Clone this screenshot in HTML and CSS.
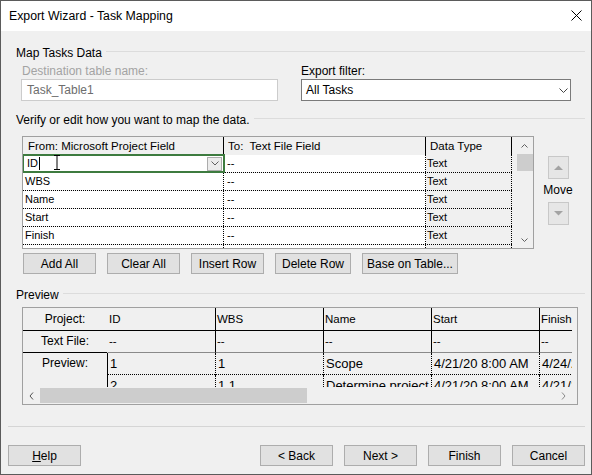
FILE: index.html
```html
<!DOCTYPE html>
<html>
<head>
<meta charset="utf-8">
<title>Export Wizard - Task Mapping</title>
<link rel="stylesheet" href="styles.css">
</head>
<body>
<div class="window">
  <div class="titlebar">
    <span class="title">Export Wizard - Task Mapping</span>
    <svg class="close" width="11" height="11" viewBox="0 0 11 11"><path d="M0.5 0.5 L10.5 10.5 M10.5 0.5 L0.5 10.5" stroke="#000" stroke-width="1" fill="none"/></svg>
  </div>
  <div class="content">
    <div class="group-head mtd"><span>Map Tasks Data</span><i class="rule"></i></div>
    <div class="fields">
      <div class="field dest">
        <div class="flabel">Destination table name:</div>
        <div class="input">Task_Table1</div>
      </div>
      <div class="field filter">
        <div class="flabel">Export filter:</div>
        <div class="select"><span>All Tasks</span><svg width="9" height="5" viewBox="0 0 9 5"><path d="M0.5 0.5 L4.5 4.5 L8.5 0.5" fill="none" stroke="#444"/></svg></div>
      </div>
    </div>
    <div class="group-head verify"><span>Verify or edit how you want to map the data.</span><i class="rule"></i></div>
    <div class="map-area">
      <div class="grid">
        <div class="gtable">
          <div class="grow ghead"><div class="c c1">From: Microsoft Project Field</div><div class="c c2">To:  Text File Field</div><div class="c c3">Data Type</div></div>
          <div class="grow"><div class="c c1 edit">ID<span class="caret"></span><span class="ibeam"><svg width="8" height="15" viewBox="0 0 8 15"><path d="M1 0.5 H7 M4 0.5 V14.5 M1 14.5 H7" stroke="#000" fill="none"/></svg></span><span class="dd"><svg width="8" height="5" viewBox="0 0 8 5"><path d="M0.5 0.5 L4 4 L7.5 0.5" fill="none" stroke="#606060"/></svg></span></div><div class="c c2">--</div><div class="c c3">Text</div></div>
          <div class="grow"><div class="c c1">WBS</div><div class="c c2">--</div><div class="c c3">Text</div></div>
          <div class="grow"><div class="c c1">Name</div><div class="c c2">--</div><div class="c c3">Text</div></div>
          <div class="grow"><div class="c c1">Start</div><div class="c c2">--</div><div class="c c3">Text</div></div>
          <div class="grow"><div class="c c1">Finish</div><div class="c c2">--</div><div class="c c3">Text</div></div>
          <div class="grow"><div class="c c1"></div><div class="c c2"></div><div class="c c3"></div></div>
        </div>
        <div class="vscroll">
          <div class="sarrow"><svg width="7" height="4" viewBox="0 0 7 4"><path d="M0.5 3.5 L3.5 0.5 L6.5 3.5" fill="none" stroke="#606060"/></svg></div>
          <div class="thumb"></div>
          <div class="spacer"></div>
          <div class="sarrow"><svg width="7" height="4" viewBox="0 0 7 4"><path d="M0.5 0.5 L3.5 3.5 L6.5 0.5" fill="none" stroke="#606060"/></svg></div>
        </div>
      </div>
      <div class="move">
        <div class="mbtn up"><svg width="9" height="5" viewBox="0 0 9 5"><path d="M0 5 L4.5 0.5 L9 5Z" fill="#a3a3a3"/></svg></div>
        <div class="move-label">Move</div>
        <div class="mbtn down"><svg width="9" height="5" viewBox="0 0 9 5"><path d="M0 0 L4.5 4.5 L9 0Z" fill="#a3a3a3"/></svg></div>
      </div>
    </div>
    <div class="btn-row">
      <div class="btn">Add All</div>
      <div class="btn">Clear All</div>
      <div class="btn">Insert Row</div>
      <div class="btn w76">Delete Row</div>
      <div class="btn w96">Base on Table...</div>
    </div>
    <div class="group-head prev-head"><span>Preview</span><i class="rule"></i></div>
    <div class="preview">
      <div class="pv-main">
        <div class="pv-table">
          <div class="pv-row h1"><div class="pv-label">Project:</div><div class="pv-cell first">ID</div><div class="pv-cell">WBS</div><div class="pv-cell">Name</div><div class="pv-cell">Start</div><div class="pv-cell">Finish</div></div>
          <div class="pv-row h2"><div class="pv-label">Text File:</div><div class="pv-cell first">--</div><div class="pv-cell">--</div><div class="pv-cell">--</div><div class="pv-cell">--</div><div class="pv-cell">--</div></div>
          <div class="pv-row d"><div class="pv-label">Preview:</div><div class="pv-cell first">1</div><div class="pv-cell">1</div><div class="pv-cell">Scope</div><div class="pv-cell">4/21/20 8:00 AM</div><div class="pv-cell">4/24/20 5:00 PM</div></div>
          <div class="pv-row d"><div class="pv-label"></div><div class="pv-cell first">2</div><div class="pv-cell">1.1</div><div class="pv-cell">Determine project scope</div><div class="pv-cell">4/21/20 8:00 AM</div><div class="pv-cell">4/21/20 12:00 PM</div></div>
        </div>
        <div class="hscroll">
          <div class="harrow"><svg width="5" height="8" viewBox="0 0 5 8"><path d="M4 0.5 L1 4 L4 7.5" fill="none" stroke="#505050"/></svg></div>
          <div class="hthumb"></div>
          <div class="spacer"></div>
          <div class="harrow"><svg width="5" height="8" viewBox="0 0 5 8"><path d="M1 0.5 L4 4 L1 7.5" fill="none" stroke="#8a8a8a"/></svg></div>
        </div>
      </div>
    </div>
  </div>
  <div class="footer">
    <div class="sep"></div>
    <div class="foot-btns">
      <div class="btn help"><span><u>H</u>elp</span></div>
      <div class="btn">&lt; Back</div>
      <div class="btn">Next &gt;</div>
      <div class="btn">Finish</div>
      <div class="btn">Cancel</div>
    </div>
  </div>
</div>
</body>
</html>
```

FILE: styles.css
```css
* { box-sizing: border-box; margin: 0; padding: 0; }
html, body { margin: 0; padding: 0; }
body {
  background: #f0f0f0;
  font-family: "Liberation Sans", Arial, sans-serif;
  font-size: 12px;
  color: #000;
}
.window {
  width: 592px;
  height: 475px;
  border: 1px solid #5b5b5b;
  background: #f0f0f0;
  display: flex;
  flex-direction: column;
  overflow: hidden;
}
.titlebar {
  height: 30px;
  flex: none;
  background: #fff;
  display: flex;
  align-items: center;
  padding: 0 9px 0 8px;
}
.title { line-height: 16px; font-size: 12.3px; }
.close { margin-left: auto; display: block; margin-top: -1px; }

.content { padding: 0 6px 0 15px; display: flex; flex-direction: column; }
.group-head {
  display: flex;
  align-items: center;
  height: 16px;
  line-height: 16px;
  white-space: nowrap;
}
.rule { flex: 1; border-top: 1px solid #dcdcdc; margin-bottom: 4px; }
.mtd { margin-top: 14px; }
.mtd .rule { margin-left: 4px; }
.verify { margin-top: 11px; }
.verify .rule { margin-left: 5px; }
.prev-head { margin-top: 13px; }
.prev-head .rule { margin-left: 4px; }

.fields { display: flex; gap: 23px; margin: 2px 0 0 5px; }
.flabel { height: 16px; line-height: 16px; }
.dest { width: 257px; }
.dest .flabel { padding-left: 1px; color: #a3a3a3; }
.filter { width: 270px; }
.input {
  height: 22px;
  border: 1px solid #cccccc;
  background: #fff;
  color: #6d6d6d;
  padding-left: 5px;
  line-height: 20px;
}
.select {
  height: 22px;
  border: 1px solid #7a7a7a;
  background: #fff;
  display: flex;
  align-items: center;
  padding: 0 2px 0 4px;
}
.select svg { margin-left: auto; display: block; }

.map-area { display: flex; margin: 8px 0 0 6px; }
.grid {
  width: 512px;
  height: 113px;
  border: 1px solid #a0a0a0;
  display: flex;
  flex: none;
  background: #f0f0f0;
}
.gtable { width: 489px; height: 111px; overflow: hidden; flex: none; }
.grow {
  display: flex;
  height: 18px;
  border-bottom: 1px dotted #000;
  font-size: 11px;
  line-height: 17px;
}
.ghead { border-bottom: 0; font-size: 11.5px; line-height: 18px; white-space: pre; }
.c { flex: none; overflow: hidden; white-space: nowrap; }
.grow .c1 { width: 201px; background: #fff; border-right: 1px dotted #000; padding-left: 2px; }
.grow .c2 { width: 202px; background: #fff; border-right: 1px dotted #000; padding-left: 3px; }
.grow .c3 { width: 86px; background: #f0f0f0; border-right: 1px dotted #000; padding-left: 1px; }
.ghead .c { background: #f0f0f0; border-right: 1px solid #000; white-space: pre; }
.ghead .c1 { padding-left: 5px; }
.ghead .c2 { padding-left: 4px; }
.ghead .c3 { padding-left: 4px; }
.grow .edit {
  position: relative;
  display: flex;
  align-items: center;
  overflow: visible;
  outline: 2px solid #3d7b3f;
  outline-offset: -1px;
  z-index: 1;
  padding-left: 4px;
}
.caret { width: 1px; height: 13px; background: #000; margin-left: 1px; }
.ibeam { position: absolute; left: 30px; top: 0; display: block; line-height: 0; }
.dd {
  margin-left: auto;
  margin-right: 1px;
  width: 15px;
  height: 14px;
  border: 1px solid #acacac;
  background: #ececec;
  display: flex;
  align-items: center;
  justify-content: center;
}
.dd svg { display: block; }

.vscroll {
  width: 17px;
  margin-left: 4px;
  display: flex;
  flex-direction: column;
  background: #f0f0f0;
  flex: none;
}
.sarrow { height: 17px; flex: none; display: flex; align-items: center; justify-content: center; }
.sarrow svg { display: block; }
.thumb { height: 17px; flex: none; background: #cdcdcd; margin-left: 1px; }
.spacer { flex: 1; }

.move {
  width: 28px;
  margin-left: 10px;
  display: flex;
  flex-direction: column;
  align-items: center;
  flex: none;
}
.mbtn {
  width: 21px;
  height: 23px;
  border: 1px solid #c8c8c8;
  background: #e6e6e6;
  display: flex;
  align-items: center;
  justify-content: center;
}
.mbtn svg { display: block; }
.mbtn.up { margin-top: 20px; }
.move-label { margin-top: 3px; line-height: 16px; }
.mbtn.down { margin-top: 4px; }

.btn-row { display: flex; gap: 11px; margin: 4px 0 0 7px; }
.btn {
  width: 73px;
  height: 21px;
  flex: none;
  border: 1px solid #adadad;
  background: #e1e1e1;
  display: flex;
  align-items: center;
  justify-content: center;
  white-space: nowrap;
  line-height: 14px;
}
.btn.w76 { width: 76px; }
.btn.w96 { width: 96px; }

.preview {
  display: flex;
  width: 556px;
  height: 98px;
  border: 1px solid #a0a0a0;
  margin: 4px 0 0 6px;
  background: #f0f0f0;
}
.pv-main { width: 549px; flex: none; display: flex; flex-direction: column; }
.pv-table { height: 79px; overflow: hidden; flex: none; }
.pv-row { display: flex; white-space: nowrap; }
.pv-label { width: 84px; flex: none; text-align: center; font-size: 12px; }
.pv-cell {
  width: 108px;
  flex: none;
  overflow: hidden;
  border-left: 1px solid #000;
  padding-left: 1px;
  font-size: 11.5px;
}
.h1 { height: 23px; border-bottom: 1px solid #000; line-height: 22px; }
.h2 { height: 22px; line-height: 21px; }
.h2 .pv-label { border-bottom: 1px solid #000; }
.h2 .pv-cell { border-bottom: 1px solid #8a8a8a; }
.h1 .first, .h2 .first { border-left-color: transparent; }
.d { height: 22px; line-height: 21px; }
.d .pv-cell {
  border-left-style: dotted;
  border-bottom: 1px dotted #000;
  font-size: 13px;
  padding-left: 2px;
}
.d .pv-cell.first { border-left-style: solid; }

.hscroll { height: 17px; flex: none; display: flex; align-items: center; }
.harrow { width: 17px; height: 17px; flex: none; display: flex; align-items: center; justify-content: center; }
.harrow svg { display: block; }
.hthumb { width: 267px; height: 15px; flex: none; background: #cdcdcd; }

.footer { padding: 0 6px 0 7px; }
.sep { border-top: 1px solid #d5d5d5; margin-top: 21px; }
.foot-btns { display: flex; gap: 11px; margin-top: 18px; }
.foot-btns .help { margin-right: auto; }
```
